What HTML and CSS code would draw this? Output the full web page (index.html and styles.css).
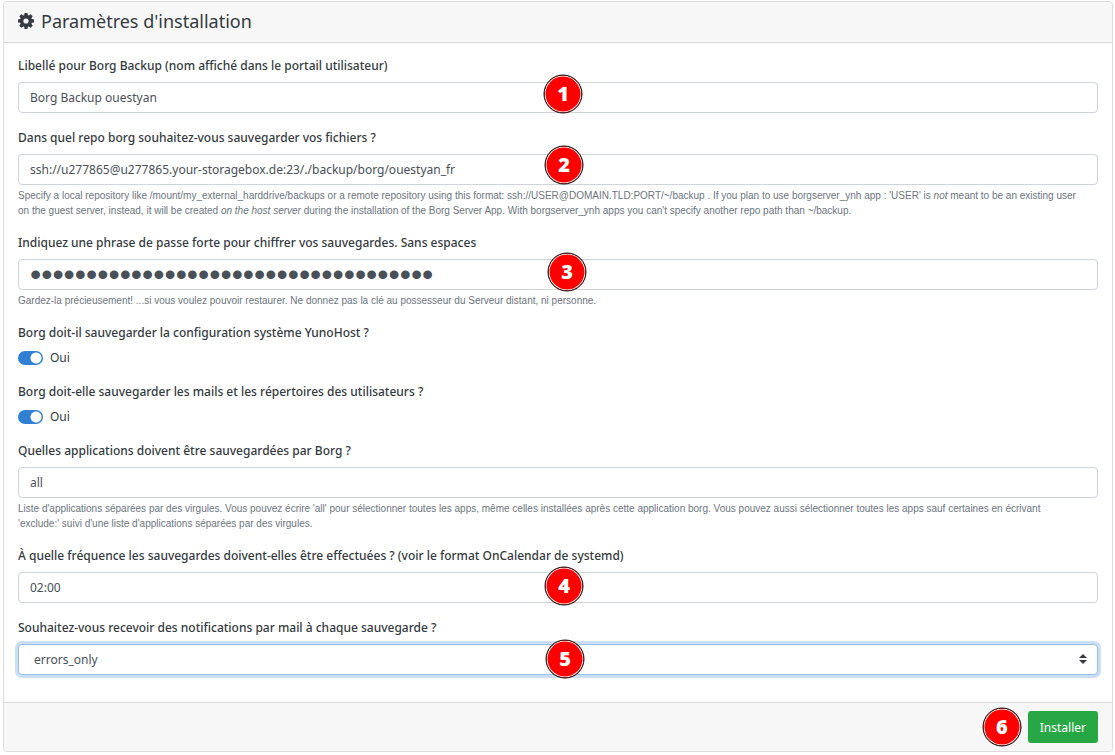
FILE: index.html
```html
<!DOCTYPE html>
<html lang="fr">
<head>
<meta charset="utf-8">
<meta name="viewport" content="width=device-width, initial-scale=1">
<title>Paramètres d'installation</title>
<link rel="stylesheet" href="styles.css">
</head>
<body>
<form class="card">
  <header class="card-header">
    <svg class="gear" viewBox="0 0 16 16" aria-hidden="true"><path fill-rule="evenodd" d="M6.600 0h2.800l.4 2.100 1 .4 1.900-1.300 2 2-1.300 1.900.4 1 2.200.5v2.800l-2.200.4-.4 1 1.300 1.900-2 2-1.900-1.300-1 .4-.4 2.200H6.600l-.4-2.200-1-.4-1.900 1.300-2-2 1.300-1.900-.4-1L0 9.400V6.600l2.200-.5.4-1-1.300-1.900 2-2 1.900 1.300 1-.4zM8 5.400a2.600 2.600 0 1 0 0 5.200 2.600 2.600 0 0 0 0-5.200z"/></svg>
    <h1 class="card-title">Paramètres d'installation</h1>
  </header>

  <div class="card-body">
    <div class="group">
      <label class="label" for="label">Libellé pour Borg Backup (nom affiché dans le portail utilisateur)</label>
      <div class="field">
        <input class="control" id="label" type="text" value="Borg Backup ouestyan">
        <span class="badge badge-1">1</span>
      </div>
    </div>

    <div class="group">
      <label class="label" for="repo">Dans quel repo borg souhaitez-vous sauvegarder vos fichiers ?</label>
      <div class="field">
        <input class="control" id="repo" type="text" value="ssh://u277865@u277865.your-storagebox.de:23/./backup/borg/ouestyan_fr">
        <span class="badge badge-2">2</span>
      </div>
      <p class="help">Specify a local repository like /mount/my_external_harddrive/backups or a remote repository using this format: ssh://USER@DOMAIN.TLD:PORT/~/backup . If you plan to use borgserver_ynh app : 'USER' is <em>not</em> meant to be an existing user <br>on the guest server, instead, it will be created <em>on the host server</em> during the installation of the Borg Server App. With borgserver_ynh apps you can't specify another repo path than ~/backup.</p>
    </div>

    <div class="group">
      <label class="label" for="pass">Indiquez une phrase de passe forte pour chiffrer vos sauvegardes. Sans espaces</label>
      <div class="field">
        <input class="control control-password" id="pass" type="password" value="abcdefghijklmnopqrstuvwxyz0123456789">
        <span class="badge badge-3">3</span>
      </div>
      <p class="help">Gardez-la précieusement! ...si vous voulez pouvoir restaurer. Ne donnez pas la clé au possesseur du Serveur distant, ni personne.</p>
    </div>

    <div class="group" role="group" aria-labelledby="conf-label">
      <div class="label" id="conf-label">Borg doit-il sauvegarder la configuration système YunoHost ?</div>
      <label class="switch-row"><input class="switch" type="checkbox" checked>Oui</label>
    </div>

    <div class="group" role="group" aria-labelledby="data-label">
      <div class="label" id="data-label">Borg doit-elle sauvegarder les mails et les répertoires des utilisateurs ?</div>
      <label class="switch-row"><input class="switch" type="checkbox" checked>Oui</label>
    </div>

    <div class="group">
      <label class="label" for="apps">Quelles applications doivent être sauvegardées par Borg ?</label>
      <div class="field">
        <input class="control" id="apps" type="text" value="all">
      </div>
      <p class="help">Liste d'applications séparées par des virgules. Vous pouvez écrire 'all' pour sélectionner toutes les apps, même celles installées après cette application borg. Vous pouvez aussi sélectionner toutes les apps sauf certaines en écrivant <br>'exclude:' suivi d'une liste d'applications séparées par des virgules.</p>
    </div>

    <div class="group">
      <label class="label" for="freq">À quelle fréquence les sauvegardes doivent-elles être effectuées ? (voir le format OnCalendar de systemd)</label>
      <div class="field">
        <input class="control" id="freq" type="text" value="02:00">
        <span class="badge badge-4">4</span>
      </div>
    </div>

    <div class="group">
      <label class="label" for="mail">Souhaitez-vous recevoir des notifications par mail à chaque sauvegarde ?</label>
      <div class="field">
        <select class="control control-select" id="mail"><option>errors_only</option></select>
        <svg class="arrows" viewBox="0 0 8 10" aria-hidden="true"><path d="M4 0 8 4H0zM0 6h8L4 10z"/></svg>
        <span class="badge badge-5">5</span>
      </div>
    </div>
  </div>

  <footer class="card-footer">
    <div class="action">
      <span class="badge badge-6">6</span>
      <button class="button" type="button">Installer</button>
    </div>
  </footer>
</form>
</body>
</html>
```
FILE: styles.css
```css
* {
  box-sizing: border-box;
}

body {
  margin: 1px 2px 0 3px;
  background: #fff;
  color: #343a40;
  font: 12px/19px "Noto Sans", "Open Sans", sans-serif;
}

.card {
  border: 1px solid #dcdcdc;
  border-radius: 4px;
  box-shadow: 0 1px 1px #eee;
}

.card-header {
  display: flex;
  align-items: center;
  gap: 7px;
  height: 41px;
  padding: 0 14px 2px;
  border-bottom: 1px solid #d8d8d8;
  border-radius: 3px 3px 0 0;
  background: #f7f7f7;
}

.gear {
  width: 16px;
  height: 16px;
  fill: #343a40;
}

.card-title {
  margin: 0;
  font-size: 18px;
  font-weight: 400;
  line-height: 24px;
}

.card-body {
  padding: 13px 14px 12px;
}

.group {
  margin-bottom: 15px;
}

.label {
  display: block;
  padding-bottom: 7px;
  font-weight: 500;
}

.field {
  position: relative;
}

.control {
  display: block;
  width: 100%;
  height: 31px;
  padding: 0 11px;
  border: 1px solid #ced4da;
  border-radius: 4px;
  background: #fff;
  color: #495057;
  font: inherit;
}

.control-password {
  font-family: "Liberation Sans", sans-serif;
  font-size: 32px;
}

.control-select {
  padding: 0 15px;
  border-color: #97c1ea;
  outline: none;
  box-shadow: 0 0 0 3px #cbdff4;
  appearance: none;
}

.arrows {
  position: absolute;
  top: 10px;
  right: 11px;
  width: 8px;
  height: 10px;
  fill: #343a40;
  pointer-events: none;
}

.help {
  margin: 3px 0 0;
  color: #6c757d;
  font-family: "Liberation Sans", Arial, sans-serif;
  font-size: 10px;
  line-height: 15px;
}

.switch-row {
  display: flex;
  align-items: center;
  gap: 7px;
  width: max-content;
  line-height: 18px;
}

.switch {
  width: 25px;
  height: 14px;
  margin: 0;
  border-radius: 7px;
  background: radial-gradient(circle at 18px 7px, #fff 5px, #2f7fd3 6px);
  appearance: none;
}

.badge {
  position: absolute;
  display: flex;
  align-items: center;
  justify-content: center;
  width: 39px;
  height: 39px;
  padding-bottom: 1px;
  border: 1px solid #111;
  border-radius: 50%;
  background: #f00;
  box-shadow: inset 0 0 0 1px #fff;
  color: #fff;
  font: 800 20px/20px "Open Sans", sans-serif;
  transform: translate(-50%, -50%);
  pointer-events: none;
}

.badge-1 {
  top: 12px;
  left: calc(50% + 5px);
}

.badge-2 {
  top: 11px;
  left: calc(50% + 6px);
}

.badge-3 {
  top: 13px;
  left: calc(50% + 9px);
}

.badge-4 {
  top: 14px;
  left: calc(50% + 6px);
}

.badge-5 {
  top: 15px;
  left: calc(50% + 7px);
}

.badge-6 {
  top: 50%;
  left: -26px;
}

.card-footer {
  display: flex;
  justify-content: flex-end;
  padding: 8px 14px;
  border-top: 1px solid #d8d8d8;
  border-radius: 0 0 3px 3px;
  background: #f7f7f7;
}

.action {
  position: relative;
}

.button {
  height: 32px;
  padding: 0 12px;
  border: 0;
  border-radius: 3px;
  background: #28a745;
  color: #fff;
  font: inherit;
}
```
